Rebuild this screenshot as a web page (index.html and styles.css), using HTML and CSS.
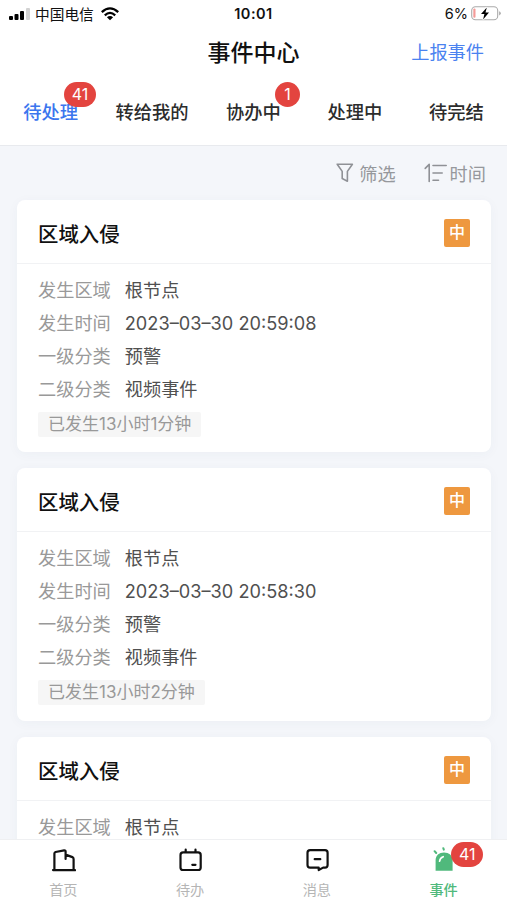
FILE: index.html
```html
<!DOCTYPE html>
<html lang="zh-CN">
<head>
<meta charset="utf-8">
<title>事件中心</title>
<link rel="stylesheet" href="styles.css">
</head>
<body>
<div class="app">
  <div class="status">
    <div class="carrier">
      <svg class="signal" width="21" height="14" viewBox="0 0 21 14"><rect x="0" y="9" width="4" height="4" rx="1"/><rect x="5.5" y="7" width="4" height="6" rx="1"/><rect x="11" y="4" width="4" height="9" rx="1"/><rect x="17" y="1" width="4" height="12" rx="1" fill="#d2d2d2"/></svg>
      <span class="carrier-name">中国电信</span>
      <svg class="wifi" width="18" height="14" viewBox="0 0 18 14" fill="none" stroke="#000" stroke-width="2.3"><path d="M.8 5.2Q9-2.4 17.2 5.2M3.8 8.3Q9 3.5 14.2 8.3"/><path d="M9 13.2L5.9 10.2Q9 7.7 12.1 10.2Z" fill="#000" stroke="none"/></svg>
    </div>
    <div class="clock">10:01</div>
    <div class="power">
      <span>6%</span>
      <svg width="30" height="15" viewBox="0 0 30 15"><rect x=".7" y=".7" width="26" height="13" rx="3.8" fill="#fff" stroke="#aaa" stroke-width="1.1"/><rect x="2.3" y="2.6" width="2.2" height="9.2" rx="1" fill="#f49a98"/><path d="M28.1 5.2v4.2q1.7-.7 1.7-2.1t-1.7-2.1Z" fill="#aaa"/><path d="M15.8 1.4L10 8h3.4l-1.3 5.4L18 6.6h-3.5Z" fill="#000" stroke="#fff" stroke-width="1.6" paint-order="stroke"/></svg>
    </div>
  </div>
  <header class="titlebar">
    <h1>事件中心</h1>
    <a class="report">上报事件</a>
  </header>
  <nav class="tabs">
    <div class="tab active"><span class="label">待处理<b class="badge wide">41</b></span></div>
    <div class="tab"><span class="label">转给我的</span></div>
    <div class="tab"><span class="label">协办中<b class="badge">1</b></span></div>
    <div class="tab"><span class="label">处理中</span></div>
    <div class="tab"><span class="label">待完结</span></div>
  </nav>
  <main class="content">
    <div class="filters">
      <div class="filter"><svg width="18" height="20" viewBox="0 0 18 20" fill="none" stroke="#8f9196" stroke-width="1.6" stroke-linejoin="round"><path d="M1.2 1.2H16.4L11.4 8.4V18.2L6.2 15.5V8.4Z"/></svg><span>筛选</span></div>
      <div class="filter sort"><svg width="24" height="20" viewBox="0 0 24 20" fill="none" stroke="#8f9196" stroke-width="1.6" stroke-linecap="round" stroke-linejoin="round"><path d="M1.2 5.4L5.2 1.4V18.5M9 2.5H22.2M9 10H18.2M9 17.2H14.5"/></svg><span>时间</span></div>
    </div>
    <article class="card">
      <div class="card-head"><h2>区域入侵</h2><span class="level">中</span></div>
      <div class="card-body">
        <div class="row"><span class="key">发生区域</span><span>根节点</span></div>
        <div class="row"><span class="key">发生时间</span><span>2023–03–30 20:59:08</span></div>
        <div class="row"><span class="key">一级分类</span><span>预警</span></div>
        <div class="row"><span class="key">二级分类</span><span>视频事件</span></div>
        <div class="elapsed">已发生13小时1分钟</div>
      </div>
    </article>
    <article class="card">
      <div class="card-head"><h2>区域入侵</h2><span class="level">中</span></div>
      <div class="card-body">
        <div class="row"><span class="key">发生区域</span><span>根节点</span></div>
        <div class="row"><span class="key">发生时间</span><span>2023–03–30 20:58:30</span></div>
        <div class="row"><span class="key">一级分类</span><span>预警</span></div>
        <div class="row"><span class="key">二级分类</span><span>视频事件</span></div>
        <div class="elapsed">已发生13小时2分钟</div>
      </div>
    </article>
    <article class="card">
      <div class="card-head"><h2>区域入侵</h2><span class="level">中</span></div>
      <div class="card-body">
        <div class="row"><span class="key">发生区域</span><span>根节点</span></div>
      </div>
    </article>
  </main>
  <footer class="bottom">
    <div class="item">
      <svg width="26" height="26" viewBox="0 0 26 26" fill="none" stroke="#111" stroke-width="2.2" stroke-linecap="round" stroke-linejoin="round"><path d="M3 23.1H25M4.4 23V6.4Q4.4 5.3 5.5 5L14.2 3.3Q15.6 3.2 15.6 4.5V12M15.6 7.6L22.4 10.1Q23.6 10.7 23.6 12V23"/></svg>
      <span>首页</span>
    </div>
    <div class="item">
      <svg width="26" height="26" viewBox="0 0 26 26" fill="none" stroke="#111" stroke-width="2.2" stroke-linecap="round"><rect x="3.5" y="5.4" width="20.2" height="17.6" rx="2.6"/><path d="M8.7 2.7V5M18.5 2.7V5M15.3 17.8H18.5"/></svg>
      <span>待办</span>
    </div>
    <div class="item">
      <svg width="26" height="26" viewBox="0 0 26 26" fill="none" stroke="#111" stroke-width="2.2" stroke-linecap="round" stroke-linejoin="round"><path d="M6.1 3.2H21Q23.6 3.2 23.6 5.8V18Q23.6 20.6 21 20.6H19.1L14.7 23V20.6H6.1Q3.5 20.6 3.5 18V5.8Q3.5 3.2 6.1 3.2ZM10.7 12.2H16.3"/></svg>
      <span>消息</span>
    </div>
    <div class="item current">
      <svg width="26" height="26" viewBox="0 0 26 26"><path d="M4.6 23.8V13.4C4.6 8.4 8.1 5.5 13 5.5S21.6 8.4 21.6 13.4V23.8Z" fill="#50b97c"/><g fill="none" stroke="#50b97c" stroke-width="2" stroke-linecap="round"><path d="M3.6 4.2L5.2 6M12.3 1.2L12.8 2.6"/><path d="M8.6 14.2Q8.9 10.8 12.2 9.7" stroke="#fff" stroke-width="1.7"/></g></svg>
      <span>事件</span>
      <b class="badge wide">41</b>
    </div>
  </footer>
</div>
</body>
</html>
```
FILE: styles.css
```css
* { box-sizing: border-box; }
body {
  margin: 0;
  font-family: Inter, "Noto Sans CJK SC", sans-serif;
  background: #fff;
}
h1, h2 { margin: 0; }
svg { display: block; flex: none; }
.app {
  width: 507px;
  height: 900px;
  display: flex;
  flex-direction: column;
  overflow: hidden;
  white-space: nowrap;
}
.status {
  flex: none;
  height: 27px;
  display: grid;
  grid-template-columns: 1fr auto 1fr;
  align-items: center;
  padding: 0 6px 0 6px;
  font-size: 14.5px;
  color: #111;
}
.carrier { display: flex; align-items: center; gap: 5px; padding-left: 3px; }
.carrier-name { font-size: 14.7px; }
.wifi { margin-left: 2px; }
.clock { font-weight: 600; letter-spacing: .5px; }
.power { display: flex; justify-content: flex-end; align-items: center; gap: 3px; }
.titlebar {
  flex: none;
  height: 50px;
  display: grid;
  grid-template-columns: 1fr auto 1fr;
  align-items: center;
  padding: 0 23px 2px;
}
h1 { grid-column: 2; font-size: 23px; font-weight: 500; color: #111; }
.report { justify-self: end; font-size: 18.2px; color: #4a82f0; }
.tabs {
  flex: none;
  height: 69px;
  display: grid;
  grid-template-columns: repeat(5, 1fr);
  align-items: center;
  padding-bottom: 1px;
  border-bottom: 1px solid #e8eaee;
  font-size: 18.3px;
  font-weight: 500;
  color: #2c2c2c;
}
.tab { text-align: center; }
.tab.active { color: #3b76ee; }
.label { position: relative; }
.badge {
  position: absolute;
  top: -19px;
  right: -19px;
  min-width: 25px;
  height: 25px;
  border-radius: 13px;
  background: #e3443f;
  color: #fff;
  font-size: 16px;
  font-weight: 400;
  line-height: 25px;
  text-align: center;
}
.badge.wide { width: 32px; right: -18px; }
.content {
  flex: 1;
  min-height: 0;
  overflow: hidden;
  background: #f4f6fa;
  padding: 0 16px 0 17px;
}
.filters {
  height: 54px;
  display: flex;
  justify-content: flex-end;
  align-items: center;
  gap: 28px;
  padding: 0 5px 1px 0;
  font-size: 18.2px;
  color: #96989c;
}
.filter { display: flex; align-items: center; gap: 5px; }
.sort { gap: 2px; }
.card {
  height: 252.4px;
  margin-bottom: 16px;
  background: #fff;
  border-radius: 8px;
  box-shadow: 0 2px 12px rgba(60, 70, 100, .04);
}
.card-head {
  height: 64px;
  display: flex;
  align-items: center;
  justify-content: space-between;
  padding: 3px 21px 0;
  border-bottom: 1px solid #f1f2f4;
}
h2 { font-size: 20.4px; font-weight: 500; color: #111; }
.level {
  width: 26px;
  height: 28px;
  border-radius: 2px;
  background: #ee983f;
  color: #fff;
  font-size: 16px;
  font-weight: 500;
  line-height: 27px;
  text-align: center;
}
.card-body { padding: 10px 21px; font-size: 18.2px; color: #505050; }
.row { display: flex; align-items: center; gap: 14px; height: 33px; line-height: 33px; }
.key { color: #999; }
.elapsed {
  width: fit-content;
  height: 25px;
  margin-top: 6px;
  padding: 0 10px;
  border-radius: 2px;
  background: #f6f6f6;
  font-size: 17px;
  line-height: 24px;
  color: #999;
}
.bottom {
  flex: none;
  height: 61px;
  display: grid;
  grid-template-columns: repeat(4, 1fr);
  border-top: 1px solid #eff0f2;
  background: #fff;
}
.item {
  position: relative;
  display: flex;
  flex-direction: column;
  align-items: center;
  padding-top: 7px;
  font-size: 14.2px;
  line-height: 20px;
  color: #b5b5b5;
}
.item span { margin-top: 7px; }
.item.current span { color: #50b97c; font-weight: 500; }
.item .badge { top: 2px; left: 71px; right: auto; }
```
